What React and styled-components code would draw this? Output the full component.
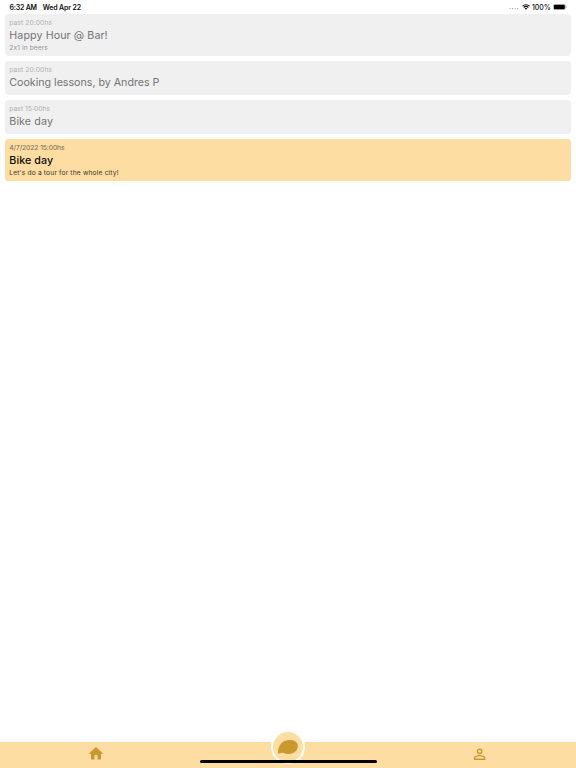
import React from "react";
import styled, { createGlobalStyle } from "styled-components";

const GlobalStyle = createGlobalStyle`
  * { box-sizing: border-box; }
  body { margin: 0; background: #fff; }
`;

const Screen = styled.div`
  display: flex;
  flex-direction: column;
  height: 768px;
  overflow: hidden;
  font-family: Inter, sans-serif;
  background: #fff;
`;

const StatusBar = styled.header`
  display: flex;
  justify-content: space-between;
  align-items: center;
  height: 14px;
  padding: 0 9px 0 9.5px;
  font-size: 7px;
  font-weight: 600;
  line-height: 14px;
  color: #111;
  white-space: nowrap;
`;

const StatusGroup = styled.div`
  display: flex;
  align-items: center;
  gap: ${(p) => p.$gap}px;
`;

const StatusText = styled.span`
  padding-top: 1px;
  letter-spacing: ${(p) => p.$spacing || 0}px;
  font-weight: ${(p) => p.$weight || 600};
`;

const Events = styled.main`
  display: flex;
  flex: 1;
  flex-direction: column;
  gap: 4.6px;
  padding: 0 5px;
`;

const Card = styled.article`
  height: ${(p) => (p.$tall ? 42.4 : 34.2)}px;
  padding: 4px 4.3px 0;
  border-radius: 3.5px;
  background: ${(p) => (p.$past ? "#f0f0f0" : "#fddda2")};
  white-space: nowrap;
`;

const When = styled.div`
  font-size: 6.8px;
  line-height: 10px;
  letter-spacing: ${(p) => p.$spacing}px;
  color: ${(p) => (p.$past ? "#b0b0b0" : "#766a53")};
`;

const Title = styled.h2`
  margin: 0;
  font-size: 10.7px;
  font-weight: ${(p) => (p.$past ? 400 : 500)};
  line-height: 15px;
  letter-spacing: ${(p) => p.$spacing}px;
  color: ${(p) => (p.$past ? "#747474" : "#0c0a06")};
`;

const Note = styled.p`
  margin: 0;
  font-size: 6.7px;
  line-height: 11.6px;
  letter-spacing: ${(p) => p.$spacing}px;
  color: ${(p) => (p.$past ? "#959595" : "#40382a")};
`;

const TabBar = styled.nav`
  position: relative;
  display: grid;
  grid-template-columns: repeat(3, 1fr);
  height: 26px;
  background: #fddda2;
`;

const Tab = styled.div`
  display: flex;
  justify-content: center;
  align-items: center;
  padding-bottom: 1.5px;
  color: #c9982f;
  svg { display: block; }
`;

const ChatButton = styled.div`
  position: absolute;
  top: -12.5px;
  left: calc(50% - 17px);
  display: flex;
  justify-content: center;
  align-items: center;
  width: 34px;
  height: 34px;
  border: 2px solid #fff;
  border-radius: 50%;
  background: #fddda2;
`;

const HomeIndicator = styled.div`
  position: absolute;
  bottom: 4.6px;
  left: 199.5px;
  width: 177px;
  height: 3px;
  border-radius: 2px;
  background: #000;
`;

const WifiIcon = () => (
  <svg width="8" height="6" viewBox="0 0 16 12">
    <path d="M1 4.4a10 10 0 0 1 14 0M3.4 7a6.6 6.6 0 0 1 9.2 0" fill="none" stroke="#111" strokeWidth="2.2" />
    <path d="M8 11.6 5.4 9a3.7 3.7 0 0 1 5.2 0z" fill="#111" />
  </svg>
);

const BatteryIcon = () => (
  <svg width="14" height="6" viewBox="0 0 14 6">
    <rect x=".3" y=".3" width="12.1" height="5.4" rx="1.6" fill="#fff" stroke="#888" strokeWidth=".5" />
    <rect x=".9" y=".8" width="10.9" height="4.4" rx=".9" fill="#000" />
    <path d="M13 2v2q.7-.3.7-1T13 2" fill="#888" />
  </svg>
);

const DotsIcon = () => (
  <svg width="10" height="6" viewBox="0 0 10 6">
    {[1, 3.6, 6.2, 8.8].map((x) => (
      <circle key={x} cx={x} cy="4.6" r=".6" fill="#999" />
    ))}
  </svg>
);

const HomeIcon = () => (
  <svg width="16" height="16" viewBox="1 1.5 22 22">
    <path fill="currentColor" d="M10 20v-6h4v6h5v-8h3L12 3 2 12h3v8z" />
  </svg>
);

const PersonIcon = () => (
  <svg width="17" height="17" viewBox="1.2 0.4 24 24">
    <path
      fill="currentColor"
      d="M12 5.9a2.1 2.1 0 1 1 0 4.2 2.1 2.1 0 0 1 0-4.2m0 9c2.97 0 6.1 1.46 6.1 2.1v1.1H5.9V17c0-.64 3.13-2.1 6.1-2.1M12 4a4 4 0 1 0 0 8 4 4 0 0 0 0-8m0 9c-2.67 0-8 1.34-8 4v3h16v-3c0-2.66-5.33-4-8-4"
    />
  </svg>
);

const ChatIcon = () => (
  <svg width="20" height="16" viewBox="0 0 20 16">
    <path
      fill="#c9982f"
      d="M.2 15.1C-.1 11.2.5 7.5 2.9 4.7 5.4 1.9 8.6.9 12.2.9c4.6 0 7.7 2.5 7.7 6.2 0 4.2-3.8 7.9-9 7.9-2 0-3.4-.4-5.1-1.1-1.9-.4-3.6 0-5.6 1.2z"
    />
  </svg>
);

const events = [
  { past: true, when: "past 20:00hs", ws: 0.04, title: "Happy Hour @ Bar!", ts: 0.09, note: "2x1 in beers", ns: 0.08 },
  { past: true, when: "past 20:00hs", ws: 0.04, title: "Cooking lessons, by Andres P", ts: -0.02 },
  { past: true, when: "past 15:00hs", ws: 0, title: "Bike day", ts: 0.12 },
  { past: false, when: "4/7/2022 15:00hs", ws: -0.1, title: "Bike day", ts: 0.1, note: "Let's do a tour for the whole city!", ns: 0.15 },
];

export default function App() {
  return (
    <Screen>
      <GlobalStyle />
      <StatusBar>
        <StatusGroup $gap={6}>
          <StatusText $spacing={-0.23}>6:32 AM</StatusText>
          <StatusText $spacing={-0.17}>Wed Apr 22</StatusText>
        </StatusGroup>
        <StatusGroup $gap={2.5}>
          <DotsIcon />
          <WifiIcon />
          <StatusText $weight={500} $spacing={-0.1}>100%</StatusText>
          <BatteryIcon />
        </StatusGroup>
      </StatusBar>
      <Events>
        {events.map((e, i) => (
          <Card key={i} $past={e.past} $tall={Boolean(e.note)}>
            <When $past={e.past} $spacing={e.ws}>{e.when}</When>
            <Title $past={e.past} $spacing={e.ts}>{e.title}</Title>
            {e.note && <Note $past={e.past} $spacing={e.ns}>{e.note}</Note>}
          </Card>
        ))}
      </Events>
      <TabBar>
        <Tab><HomeIcon /></Tab>
        <Tab><ChatButton><ChatIcon /></ChatButton></Tab>
        <Tab><PersonIcon /></Tab>
        <HomeIndicator />
      </TabBar>
    </Screen>
  );
}
